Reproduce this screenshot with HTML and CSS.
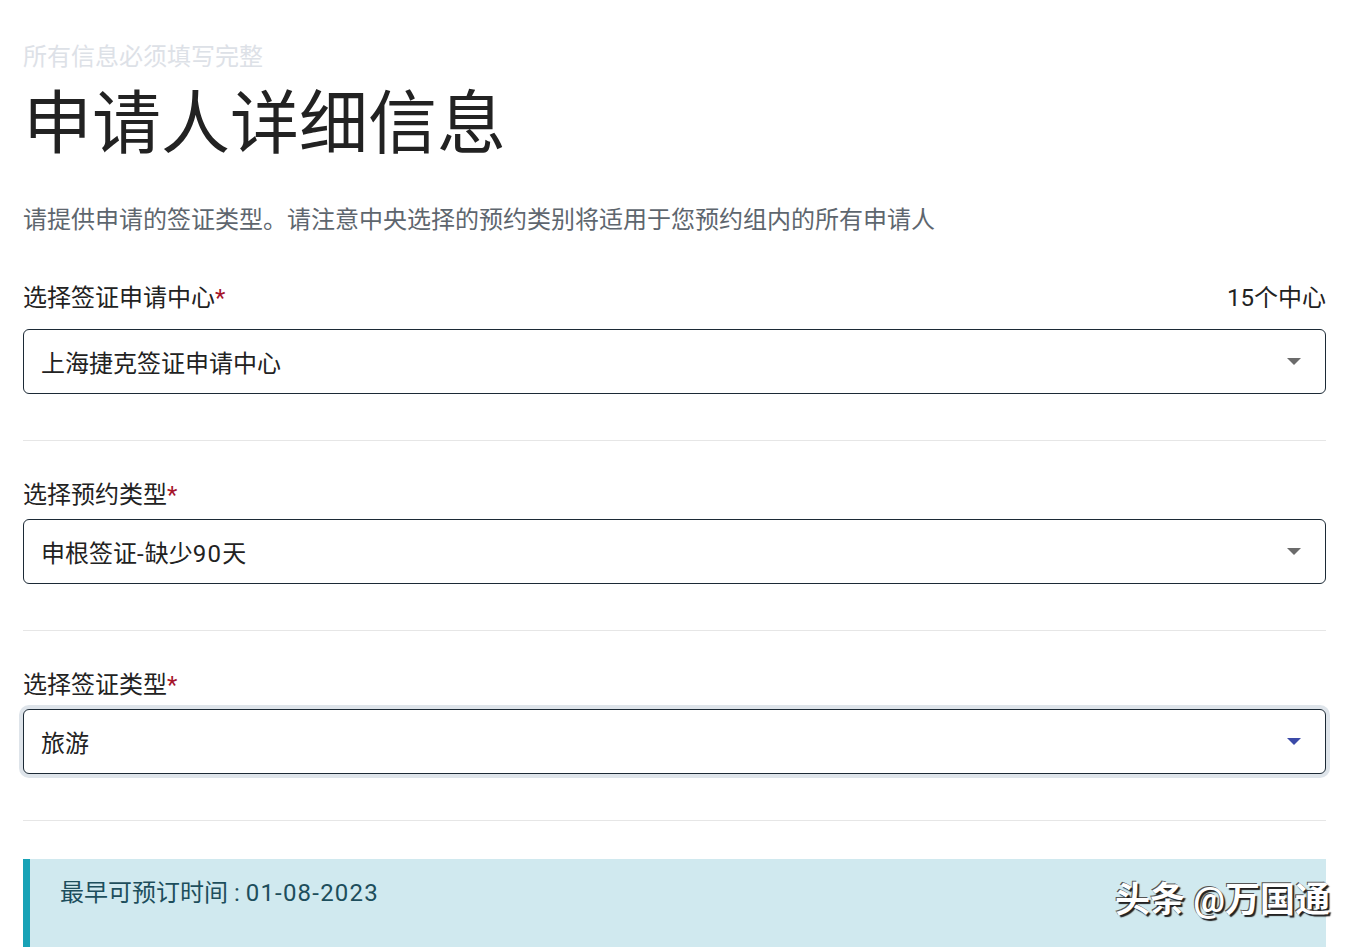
FILE: index.html
```html
<!DOCTYPE html>
<html lang="zh-CN">
<head>
    <meta charset="UTF-8">
    <title>申请人详细信息</title>
    <link rel="stylesheet" href="styles.css">
</head>
<body>
    <div id="page">
        <p class="note">所有信息必须填写完整</p>
        <h1 class="title">申请人详细信息</h1>
        <p class="desc">请提供申请的签证类型。请注意中央选择的预约类别将适用于您预约组内的所有申请人</p>

        <div class="field first">
            <div class="label-row">
                <label>选择签证申请中心<span class="req">*</span></label>
                <span class="count">15个中心</span>
            </div>
            <div class="select">
                <span>上海捷克签证申请中心</span>
                <svg width="14" height="8" viewBox="0 0 14 8"><path d="M0 0h14L7 7z" fill="#6b6b6b"/></svg>
            </div>
        </div>
        <hr class="sep">

        <div class="field">
            <div class="label-row">
                <label>选择预约类型<span class="req">*</span></label>
            </div>
            <div class="select">
                <span>申根签证<span class="num">-</span>缺少<span class="num">90</span>天</span>
                <svg width="14" height="8" viewBox="0 0 14 8"><path d="M0 0h14L7 7z" fill="#6b6b6b"/></svg>
            </div>
        </div>
        <hr class="sep">

        <div class="field">
            <div class="label-row">
                <label>选择签证类型<span class="req">*</span></label>
            </div>
            <div class="select focus">
                <span>旅游</span>
                <svg width="14" height="8" viewBox="0 0 14 8"><path d="M0 0h14L7 7z" fill="#3b4aa8"/></svg>
            </div>
        </div>
        <hr class="sep">

        <div class="alert">最早可预订时间 : <span class="num">01-08-2023</span></div>

        <div class="watermark">头条 @万国通</div>
    </div>
</body>
</html>
```
FILE: styles.css
```css
*{
    margin: 0;
    padding: 0;
    box-sizing: border-box;
}
body{
    font-family: Roboto, "Noto Sans CJK SC", sans-serif;
    color: #212529;
    background: #fff;
    overflow: hidden;
}
#page{
    position: relative;
    padding: 42px 32px 0 23px;
}
.note{
    font-size: 24px;
    line-height: 30px;
    color: #dde1e7;
}
.title{
    font-size: 69px;
    font-weight: 400;
    line-height: 82px;
    margin-top: 12px;
    color: #222;
}
.desc{
    font-size: 24px;
    line-height: 32px;
    color: #5e666e;
    margin-top: 38px;
}
.field{
    margin-top: 38px;
}
.field.first{
    margin-top: 46px;
}
.label-row{
    display: flex;
    justify-content: space-between;
    align-items: center;
    height: 32px;
    font-size: 24px;
    line-height: 32px;
    color: #222;
    margin-bottom: 8px;
}
.field.first .label-row{
    margin-bottom: 15px;
}
.count{
    color: #222;
}
.req{
    color: #a5142b;
}
.num{
    letter-spacing: 1.2px;
}
.select{
    height: 65px;
    border: 1px solid #1c2a36;
    border-radius: 6px;
    display: flex;
    align-items: center;
    justify-content: space-between;
    padding: 0 24px 0 17px;
    font-size: 24px;
    color: #222;
    background: #fff;
}
.select svg{
    display: block;
}
.select.focus{
    box-shadow: 0 0 0 4px #dee4ea;
}
.sep{
    border: 0;
    border-top: 1px solid #e6e6e6;
    margin-top: 46px;
}
.alert{
    margin-top: 38px;
    background: #d0e9ef;
    border-left: 7px solid #18a2b6;
    height: 120px;
    padding: 18px 0 0 30px;
    font-size: 24px;
    line-height: 32px;
    color: #1d4e5c;
}
.watermark{
    position: absolute;
    right: 28px;
    top: 881px;
    font-size: 35px;
    font-weight: 700;
    line-height: 40px;
    color: #fff;
    text-shadow: 2px 2px 1px #222, -1px -1px 0 #555;
}
```
